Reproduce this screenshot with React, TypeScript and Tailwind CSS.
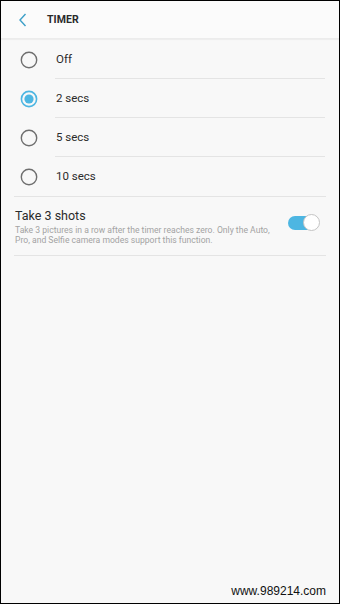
import React from "react";

const options = ["Off", "2 secs", "5 secs", "10 secs"];

function Radio({ on }: { on: boolean }) {
  return (
    <svg width="18" height="18" viewBox="0 0 18 18">
      {on ? (
        <>
          <circle cx="9" cy="9" r="7.6" fill="none" stroke="#4db6e2" strokeWidth="1.6" />
          <circle cx="9" cy="9" r="4.6" fill="#4db6e2" />
        </>
      ) : (
        <circle cx="9" cy="9" r="7.7" fill="none" stroke="#6f6f6f" strokeWidth="1.4" />
      )}
    </svg>
  );
}

export default function App() {
  return (
    <div
      className="relative w-[340px] h-[604px] bg-[#f8f8f8] border border-black overflow-hidden"
      style={{ fontFamily: "Roboto, 'Noto Sans', sans-serif" }}
    >
      <div className="h-[38px] bg-[#fbfbfb] flex items-center border-b border-[#ececec] shadow-[0_1px_1px_rgba(0,0,0,0.04)]">
        <svg width="10" height="14" viewBox="0 0 10 14" className="ml-[17px] mt-[1px]">
          <path d="M7.5 1 L2 7 L7.5 13" fill="none" stroke="#3d9fc8" strokeWidth="1.4" />
        </svg>
        <span className="ml-[19px] mt-[1px] text-[10.5px] font-bold text-[#2a2a2a] tracking-[0.1px]">TIMER</span>
      </div>

      <div className="mt-[1px]">
        {options.map((o, i) => (
          <div key={o} className="flex items-stretch h-[39px]">
            <div className="w-[54px] flex items-center justify-center pl-[1px] pt-[1px]">
              <Radio on={i === 1} />
            </div>
            <div
              className={`flex-1 mr-[14px] flex items-center text-[11.5px] text-[#2b2b2b] pt-[1px] ${
                i < 3 ? "border-b border-[#e4e4e4]" : ""
              }`}
            >
              <span className="ml-[1px]">{o}</span>
            </div>
          </div>
        ))}
      </div>

      <div className="mx-[13px] border-t border-[#e4e4e4]" />

      <div className="mx-[13px] flex items-center pt-[11px] pb-[10px] border-b border-[#e4e4e4]">
        <div className="flex-1 pl-[1px]">
          <div className="text-[12.5px] leading-[15px] text-[#2b2b2b]">Take 3 shots</div>
          <div className="text-[8.6px] leading-[10px] text-[#a3a3a3] mt-[2px] w-[264px]">
            Take 3 pictures in a row after the timer reaches zero. Only the Auto, Pro, and Selfie camera modes support this function.
          </div>
        </div>
        <div className="relative w-[32px] h-[18px] mr-[6px] mb-[8px]">
          <div className="absolute left-0 top-[2px] w-[26px] h-[14px] rounded-full bg-[#4db6e2]" />
          <div className="absolute right-0 top-0 w-[17px] h-[17px] rounded-full bg-white border border-[#c4c4c4]" />
        </div>
      </div>

      <div
        className="absolute right-[13px] bottom-[3px] text-[12px] text-[#111]"
        style={{ fontFamily: "'Liberation Sans', Arial, sans-serif" }}
      >
        www.989214.com
      </div>
    </div>
  );
}
